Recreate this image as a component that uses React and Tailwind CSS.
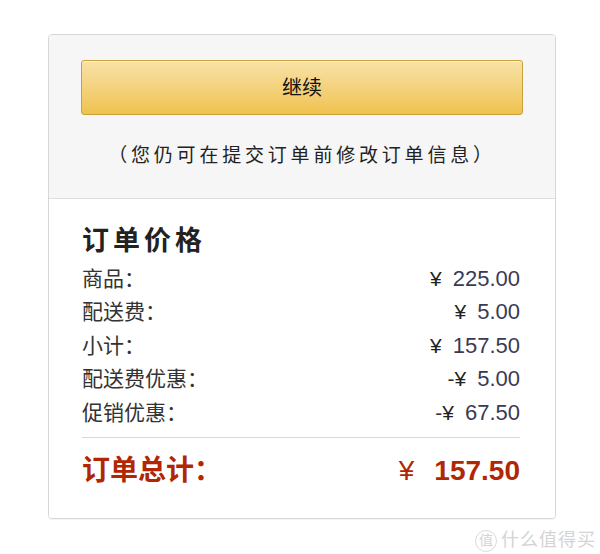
const rows = [
  { label: "商品：", sign: "", value: "225.00" },
  { label: "配送费：", sign: "", value: "5.00" },
  { label: "小计：", sign: "", value: "157.50" },
  { label: "配送费优惠：", sign: "-", value: "5.00" },
  { label: "促销优惠：", sign: "-", value: "67.50" },
];

const font = { fontFamily: '"Liberation Sans", "Noto Sans CJK SC", sans-serif' };

export default function App() {
  return (
    <div className="w-[600px] h-[554px] bg-white pt-[34px]" style={font}>
      <div className="ml-[48px] w-[508px] rounded-[4px] border border-[#d7d7d7] overflow-hidden shadow-[0_1px_1px_rgba(0,0,0,0.05)]">
        <div className="bg-[#f6f6f6] border-b border-[#dedede] px-[32px] pt-[25px] pb-[27px]">
          <button className="w-full h-[55px] rounded-[3px] border border-[#c9a23e] bg-gradient-to-b from-[#f8e2a6] to-[#f0c24c] text-[20px] text-[#111] shadow-[inset_0_1px_0_rgba(255,255,255,0.5)]">
            继续
          </button>
          <p className="mt-[26px] text-center text-[19px] leading-[30px] tracking-[3.8px] text-[#222]">
            （您仍可在提交订单前修改订单信息）
          </p>
        </div>
        <div className="bg-white pl-[33px] pr-[35px] pt-[24px] pb-[27px]">
          <h2 className="text-[27px] leading-[36px] font-bold tracking-[4px] text-[#222]">订单价格</h2>
          <div className="mt-[2.5px]">
            {rows.map((r) => (
              <div key={r.label} className="flex justify-between items-baseline text-[21px] leading-[33.5px] text-[#333]">
                <span>{r.label}</span>
                <span className="flex items-baseline">
                  <span>{r.sign}</span>
                  <span className="text-[#222] mr-[11px]">¥</span>
                  <span className="text-[22px] text-[#3a3a55]">{r.value}</span>
                </span>
              </div>
            ))}
          </div>
          <div className="mt-[8px] border-t border-[#d9d9d9]" />
          <div className="mt-[13px] flex justify-between items-baseline text-[28px] leading-[40px] font-bold text-[#b12704]">
            <span>订单总计：</span>
            <span className="flex items-baseline">
              <span className="font-normal mr-[20px]">¥</span>
              <span>157.50</span>
            </span>
          </div>
        </div>
      </div>
      <div className="flex justify-end items-center pr-[4px] mt-[8px] gap-[4px] text-[18px] text-[#d4d4d4]">
        <span className="flex items-center justify-center w-[22px] h-[22px] rounded-full border border-[#dadada] text-[14px]">值</span>
        <span className="tracking-[1px]">什么值得买</span>
      </div>
    </div>
  );
}
